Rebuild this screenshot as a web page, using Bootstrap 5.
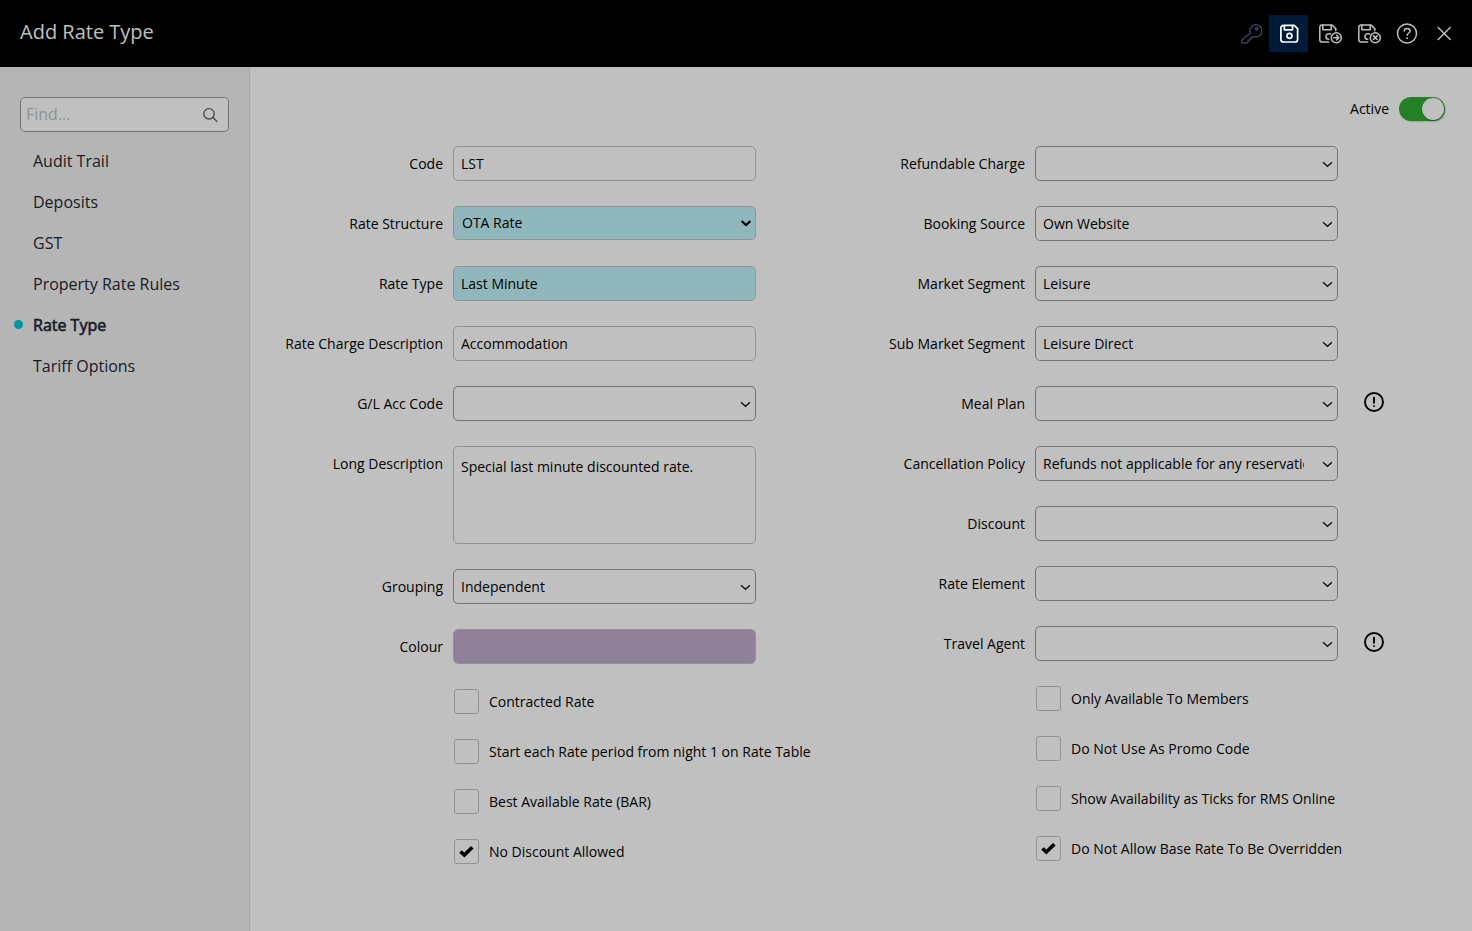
<!DOCTYPE html>
<html lang="en">
<head>
<meta charset="utf-8">
<meta name="viewport" content="width=device-width, initial-scale=1">
<title>Add Rate Type</title>
<link href="https://cdn.jsdelivr.net/npm/bootstrap@5.3.0/dist/css/bootstrap.min.css" rel="stylesheet">
<style>
  body { font-family: "Open Sans", sans-serif; font-size: 14px; line-height: 20px; color: #000; background: #c0c0c0; }
  .app-header { background: #000; height: 67px; padding: 0 8px 0 20px; }
  .app-header h1 { font-size: 20px; line-height: 28px; color: #c0c0c0; font-weight: 400; padding-bottom: 4px; }
  .tool-btn { width: 39px; height: 37px; padding: 0; border: 0; border-radius: 0; color: #c0c0c0; display: flex; align-items: center; justify-content: center; }
  .tool-btn:hover { color: #fff; }
  .tool-btn.current { background: #001a38; color: #fff; }
  .tool-btn:disabled { color: #354458; opacity: 1; border: 0; }
  svg { fill: none; stroke: currentColor; stroke-linecap: round; stroke-linejoin: round; }

  .side { width: 250px; background: #b5b5b5; border-right: 1px solid #a9a9a9; padding-top: 30px; }
  .find-box { margin: 0 20px 8px; height: 35px; border: 1px solid #747474; border-radius: 5px; background: #c0c0c0; padding: 0 9px 0 5px; }
  .find-box input { border: 0; background: none; padding: 0 0 2px; font-size: 16px; line-height: 24px; color: #000; outline: 0; min-width: 0; }
  .find-box input::placeholder { color: #929292; opacity: 1; }
  .find-box button { padding: 0; border: 0; color: #4c4c4c; display: flex; }
  .side .nav-link { height: 41px; padding: 0 14px; font-size: 16px; line-height: 24px; color: #151b28; gap: 10px; }
  .side .nav-link::before { content: ""; width: 9px; height: 9px; border-radius: 50%; }
  .side .nav-link.active { -webkit-text-stroke: 0.6px #151b28; }
  .side .nav-link.active::before { background: #00949b; }

  .work { padding: 30px 27px 30px 21px; min-width: 0; }
  .form-cols { display: grid; grid-template-columns: repeat(2, minmax(0, 1fr)); padding-right: 10px; margin-top: 25px; }
  .stack { display: flex; flex-direction: column; gap: 25px; }
  .line { display: grid; grid-template-columns: 172px minmax(0, 1fr) 97px; }
  .line label { text-align: right; line-height: 35px; }
  .line .form-control, .line .form-select { margin-left: 10px; width: calc(100% - 10px); height: 35px; border: 1px solid #929292; border-radius: 5px; background-color: #c0c0c0; color: #000; font-size: 14px; line-height: 20px; padding: 0 7px; }
  .line .form-select { border-color: #747474; padding-right: 33px; background-position: right 4px center; background-size: 12px 12px; background-image: url("data:image/svg+xml,%3Csvg xmlns='http://www.w3.org/2000/svg' viewBox='0 0 12 12'%3E%3Cpath d='M2 4.300 6.500 8.300 11 4.300' fill='none' stroke='%23111' stroke-width='1.400'/%3E%3C/svg%3E"); }
  .line textarea.form-control { height: 98px; padding-top: 10px; resize: none; }
  .line .required { background-color: #90b7bb; border-color: #929292; }
  .line select.required { height: 34px; margin-bottom: 1px; padding-left: 8px; background-image: url("data:image/svg+xml,%3Csvg xmlns='http://www.w3.org/2000/svg' viewBox='0 0 12 12'%3E%3Cpath d='M2.600 4 7 8 11.400 4' fill='none' stroke='%23000' stroke-width='2.300'/%3E%3C/svg%3E"); }
  .line .swatch { background-color: #8f8099; }
  .info-btn { padding: 0; margin: 5px 0 0 25px; border: 0; width: 22px; height: 22px; display: flex; color: #000; }
  .ticks { padding-left: 183px; }
  .ticks .form-check { min-height: 25px; margin: 0; padding: 0; display: flex; gap: 10px; }
  .ticks .form-check-input { float: none; margin: 0; flex: none; width: 25px; height: 25px; border: 1px solid #929292; border-radius: 3px; background-color: #c0c0c0; }
  .ticks .form-check-input:checked { background-color: #c0c0c0; border-color: #929292; background-size: 15px 15px; background-image: url("data:image/svg+xml,%3Csvg xmlns='http://www.w3.org/2000/svg' viewBox='0 0 15 15'%3E%3Cpath d='M1.500 7.500 5.300 11 13.300 3.200' fill='none' stroke='%23000' stroke-width='3.600'/%3E%3C/svg%3E"); }
  .ticks label { line-height: 25px; white-space: nowrap; }
  .active-row { gap: 10px; }
  .active-row .form-check-input { float: none; margin: 0; width: 46px; height: 24px; border: 0; background-color: #848484; background-size: 24px 24px; background-image: url("data:image/svg+xml,%3Csvg xmlns='http://www.w3.org/2000/svg' viewBox='0 0 24 24'%3E%3Ccircle cx='12' cy='12' r='11' fill='%23c0c0c0'/%3E%3C/svg%3E"); }
  .active-row .form-check-input:checked { background-color: #248024; box-shadow: 1px 1px 2px -1px rgba(0, 0, 0, .5); background-image: url("data:image/svg+xml,%3Csvg xmlns='http://www.w3.org/2000/svg' viewBox='0 0 24 24'%3E%3Ccircle cx='12' cy='12.600' r='11.400' fill='%23000' opacity='.25'/%3E%3Ccircle cx='12' cy='12' r='11' fill='%23c0c0c0'/%3E%3C/svg%3E"); }
</style>
</head>
<body class="d-flex flex-column min-vh-100">
<header class="app-header d-flex align-items-center justify-content-between">
  <h1 class="m-0">Add Rate Type</h1>
  <div class="d-flex" role="toolbar" aria-label="Form actions">
    <button type="button" class="btn tool-btn" disabled aria-label="Security">
      <svg width="24" height="24" viewBox="0 0 24 24" stroke-width="1.500"><path d="M12.400 11a6 6 0 1 1 3.600 3.400l-1.600 1.300h-1.700l-.3 2.100-2 .3-.3 1.900-1.200 1H4v-3.200z"/><circle cx="18.700" cy="6.800" r="1.200"/></svg>
    </button>
    <button type="button" class="btn tool-btn current" aria-label="Save">
      <svg width="24" height="24" viewBox="0 0 24 24" stroke-width="1.700"><path d="M6.500 3.300h10.700l3.400 3.400v10.700a2.600 2.600 0 0 1-2.600 2.600H6.500a2.600 2.600 0 0 1-2.600-2.600V5.900a2.600 2.600 0 0 1 2.600-2.600z"/><path d="M7.300 3.600v4.200h8.200V3.600"/><circle cx="12.500" cy="13.800" r="2.500"/></svg>
    </button>
    <button type="button" class="btn tool-btn" aria-label="Save and continue">
      <svg width="28" height="24" viewBox="0 0 28 24" stroke-width="1.500"><path d="M14.500 20H8a2.200 2.200 0 0 1-2.200-2.200V5.200A2.200 2.200 0 0 1 8 3h10l3.800 3.600v2.200"/><path d="M8.800 3.200v4.600h8.400V3.200M16.600 12c-2.800-1-4.700.4-4.700 2.500 0 1.800 1.200 2.800 2.900 2.800"/><circle cx="22.300" cy="15.700" r="5"/><path d="M19.700 15.700h5M22.600 13.400l2.300 2.300-2.300 2.300"/></svg>
    </button>
    <button type="button" class="btn tool-btn" aria-label="Save and close">
      <svg width="28" height="24" viewBox="0 0 28 24" stroke-width="1.500"><path d="M14.500 20H8a2.200 2.200 0 0 1-2.200-2.200V5.200A2.200 2.200 0 0 1 8 3h10l3.800 3.600v2.200"/><path d="M8.800 3.200v4.600h8.400V3.200M16.600 12c-2.800-1-4.700.4-4.700 2.500 0 1.800 1.200 2.800 2.900 2.800"/><circle cx="22.300" cy="15.700" r="5"/><path d="m20.500 13.900 3.600 3.600M24.100 13.900l-3.600 3.600"/></svg>
    </button>
    <button type="button" class="btn tool-btn" aria-label="Help">
      <svg width="24" height="24" viewBox="0 0 24 24" stroke-width="1.500"><circle cx="13" cy="11.500" r="9.500"/><path d="M10.200 9.100c0-3.600 5.900-3.400 5.900-.2 0 2.100-2.900 2.100-2.900 4.400"/><path d="M13.200 16.100v.2" stroke-width="1.900"/></svg>
    </button>
    <button type="button" class="btn tool-btn" aria-label="Close">
      <svg width="24" height="24" viewBox="0 0 24 24" stroke-width="1.500"><path d="m5.200 5.500 12 12M17.200 5.500l-12 12"/></svg>
    </button>
  </div>
</header>

<div class="d-flex flex-grow-1">
  <aside class="side flex-shrink-0">
    <form class="find-box d-flex align-items-center justify-content-between" role="search">
      <input class="flex-grow-1" type="text" placeholder="Find..." aria-label="Find">
      <button type="button" class="btn" aria-label="Search"><svg width="18" height="18" viewBox="0 0 18 18" stroke-width="1.400"><circle cx="8" cy="7.800" r="5.200"/><path d="m11.800 11.600 4 3.700"/></svg></button>
    </form>
    <nav class="nav flex-column">
      <a class="nav-link d-flex align-items-center" href="#">Audit Trail</a>
      <a class="nav-link d-flex align-items-center" href="#">Deposits</a>
      <a class="nav-link d-flex align-items-center" href="#">GST</a>
      <a class="nav-link d-flex align-items-center" href="#">Property Rate Rules</a>
      <a class="nav-link d-flex align-items-center active" aria-current="page" href="#">Rate Type</a>
      <a class="nav-link d-flex align-items-center" href="#">Tariff Options</a>
    </nav>
  </aside>

  <main class="work flex-grow-1">
    <div class="active-row form-switch d-flex justify-content-end align-items-center p-0">
      <label for="active">Active</label>
      <input class="form-check-input" type="checkbox" role="switch" id="active" checked>
    </div>

    <div class="form-cols">
      <div class="stack">
        <div class="line"><label for="code">Code</label><input id="code" type="text" class="form-control" value="LST"></div>
        <div class="line"><label for="structure">Rate Structure</label><select id="structure" class="form-select required"><option>OTA Rate</option></select></div>
        <div class="line"><label for="rtype">Rate Type</label><input id="rtype" type="text" class="form-control required" value="Last Minute"></div>
        <div class="line"><label for="charge">Rate Charge Description</label><input id="charge" type="text" class="form-control" value="Accommodation"></div>
        <div class="line"><label for="gl">G/L Acc Code</label><select id="gl" class="form-select"><option></option></select></div>
        <div class="line"><label for="long">Long Description</label><textarea id="long" class="form-control">Special last minute discounted rate.</textarea></div>
        <div class="line"><label for="grouping">Grouping</label><select id="grouping" class="form-select"><option>Independent</option></select></div>
        <div class="line"><label for="colour">Colour</label><input id="colour" type="text" class="form-control swatch" readonly></div>
        <div class="ticks stack">
          <div class="form-check"><input class="form-check-input" type="checkbox" id="t1"><label for="t1">Contracted Rate</label></div>
          <div class="form-check"><input class="form-check-input" type="checkbox" id="t2"><label for="t2">Start each Rate period from night 1 on Rate Table</label></div>
          <div class="form-check"><input class="form-check-input" type="checkbox" id="t3"><label for="t3">Best Available Rate (BAR)</label></div>
          <div class="form-check"><input class="form-check-input" type="checkbox" id="t4" checked><label for="t4">No Discount Allowed</label></div>
        </div>
      </div>

      <div class="stack">
        <div class="line"><label for="refund">Refundable Charge</label><select id="refund" class="form-select"><option></option></select></div>
        <div class="line"><label for="source">Booking Source</label><select id="source" class="form-select"><option>Own Website</option></select></div>
        <div class="line"><label for="market">Market Segment</label><select id="market" class="form-select"><option>Leisure</option></select></div>
        <div class="line"><label for="submarket">Sub Market Segment</label><select id="submarket" class="form-select"><option>Leisure Direct</option></select></div>
        <div class="line"><label for="meal">Meal Plan</label><select id="meal" class="form-select"><option></option></select>
          <button type="button" class="btn info-btn" aria-label="Meal plan information"><svg width="22" height="22" viewBox="0 0 22 22" stroke-width="1.900"><circle cx="11" cy="11" r="9"/><path d="M11 6.800v4.900M11 15v.1"/></svg></button></div>
        <div class="line"><label for="cancel">Cancellation Policy</label><select id="cancel" class="form-select"><option>Refunds not applicable for any reservation</option></select></div>
        <div class="line"><label for="discount">Discount</label><select id="discount" class="form-select"><option></option></select></div>
        <div class="line"><label for="element">Rate Element</label><select id="element" class="form-select"><option></option></select></div>
        <div class="line"><label for="agent">Travel Agent</label><select id="agent" class="form-select"><option></option></select>
          <button type="button" class="btn info-btn" aria-label="Travel agent information"><svg width="22" height="22" viewBox="0 0 22 22" stroke-width="1.900"><circle cx="11" cy="11" r="9"/><path d="M11 6.800v4.900M11 15v.1"/></svg></button></div>
        <div class="ticks stack">
          <div class="form-check"><input class="form-check-input" type="checkbox" id="t5"><label for="t5">Only Available To Members</label></div>
          <div class="form-check"><input class="form-check-input" type="checkbox" id="t6"><label for="t6">Do Not Use As Promo Code</label></div>
          <div class="form-check"><input class="form-check-input" type="checkbox" id="t7"><label for="t7">Show Availability as Ticks for RMS Online</label></div>
          <div class="form-check"><input class="form-check-input" type="checkbox" id="t8" checked><label for="t8">Do Not Allow Base Rate To Be Overridden</label></div>
        </div>
      </div>
    </div>
  </main>
</div>
<script src="https://cdn.jsdelivr.net/npm/bootstrap@5.3.0/dist/js/bootstrap.bundle.min.js"></script>
</body>
</html>
